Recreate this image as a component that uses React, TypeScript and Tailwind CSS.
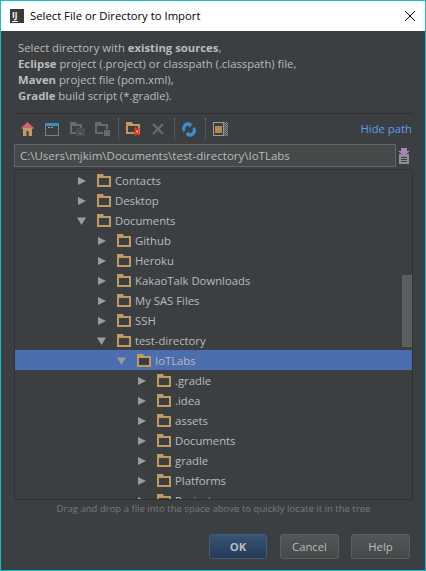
import React from "react";

const Folder = () => (
  <svg width="14" height="13" viewBox="0 0 14 13" className="shrink-0">
    <path d="M0 0H6L7 2H14V13H0Z" fill="#c19a61" />
    <rect x="2" y="4" width="10" height="7" fill="#3c3f41" />
  </svg>
);
const Arrow = ({ open }: { open: boolean }) => (
  <svg width="10" height="10" viewBox="0 0 10 10" className="mt-[1px] shrink-0">
    {open ? <path d="M0 1.5H9L4.5 9Z" fill="#9a9c9e" /> : <path d="M1 1L9 5L1 9Z" fill="#9a9c9e" />}
  </svg>
);

const rows: { t: string; l: number; open?: boolean; sel?: boolean }[] = [
  { t: "Contacts", l: 0 },
  { t: "Desktop", l: 0 },
  { t: "Documents", l: 0, open: true },
  { t: "Github", l: 1 },
  { t: "Heroku", l: 1 },
  { t: "KakaoTalk Downloads", l: 1 },
  { t: "My SAS Files", l: 1 },
  { t: "SSH", l: 1 },
  { t: "test-directory", l: 1, open: true },
  { t: "IoTLabs", l: 2, open: true, sel: true },
  { t: ".gradle", l: 3 },
  { t: ".idea", l: 3 },
  { t: "assets", l: 3 },
  { t: "Documents", l: 3 },
  { t: "gradle", l: 3 },
  { t: "Platforms", l: 3 },
  { t: "Projects", l: 3 },
];
const pads = ["pl-[62px]", "pl-[82px]", "pl-[102px]", "pl-[122px]"];

const Sep = () => <div className="h-[22px] w-0 border-l border-dotted border-[#6b6e70]" />;

export default function App() {
  return (
    <div
      className="flex h-[571px] w-[426px] flex-col border border-[#18bcc9] bg-[#3c3f41] text-[11.3px] text-[#bbbbbb]"
      style={{ fontFamily: '"Open Sans","Noto Sans",sans-serif' }}
    >
      <div className="flex h-[30px] shrink-0 items-center bg-white pl-[9px] pr-[10px] text-[#000]">
        <div className="relative h-[14px] w-[14px] shrink-0 bg-[#3a3a3a]">
          <span className="absolute left-[2px] top-[1px] text-[8px] font-bold leading-[9px] text-white">IJ</span>
          <span className="absolute bottom-[1px] left-[2px] h-[1px] w-[6px] bg-white" />
        </div>
        <span className="ml-[6px] flex-1">Select File or Directory to Import</span>
        <svg width="10" height="10" viewBox="0 0 10 10">
          <path d="M0 0L10 10M10 0L0 10" stroke="#000" strokeWidth="1" />
        </svg>
      </div>

      <div className="flex min-h-0 flex-1 flex-col pl-[13px] pr-[12px]">
        <div className="shrink-0 pl-[4px] pt-[9px] leading-[16px]">
          <div>Select directory with <b>existing sources</b>,</div>
          <div><b>Eclipse</b> project (.project) or classpath (.classpath) file,</div>
          <div><b>Maven</b> project file (pom.xml),</div>
          <div><b>Gradle</b> build script (*.gradle).</div>
        </div>

        <div className="mt-[9px] h-[1px] shrink-0 bg-[#2f3133]" />

        <div className="flex h-[30px] shrink-0 items-center justify-between">
          <div className="flex items-center pl-[7px]">
            <svg width="13" height="14" viewBox="0 0 13 14">
              <path d="M6.5 0L13 6L12 7H1L0 6Z" fill="#c8646a" />
              <path d="M2 6H11V14H7.5V9H5.5V14H2Z" fill="#c19a61" />
            </svg>
            <svg width="14" height="13" viewBox="0 0 14 13" className="ml-[11px]">
              <rect width="14" height="13" fill="#7d7f80" />
              <rect width="14" height="3" fill="#3d8fc9" />
              <rect x="1" y="3" width="12" height="9" fill="#3c3f41" />
              <rect x="3" y="4" width="2" height="1" fill="#d9a441" />
              <rect x="6" y="4" width="2" height="1" fill="#6ab0de" />
            </svg>
            <svg width="15" height="14" viewBox="0 0 15 14" className="ml-[11px]">
              <path d="M0 0H6L7 2H12V6H6V12H0Z" fill="#686a6c" />
              <rect x="2" y="4" width="8" height="6" fill="#3c3f41" />
              <rect x="6" y="6" width="9" height="8" fill="#4a4c4e" />
              <rect x="9" y="11" width="3" height="1" fill="#7d7f80" />
            </svg>
            <svg width="15" height="14" viewBox="0 0 15 14" className="ml-[10px]">
              <path d="M0 0H6L7 2H13V7H8V12H0Z" fill="#686a6c" />
              <rect x="2" y="4" width="9" height="6" fill="#3c3f41" />
              <rect x="9" y="8" width="6" height="6" fill="#686a6c" />
            </svg>
            <div className="ml-[8px]"><Sep /></div>
            <svg width="15" height="14" viewBox="0 0 15 14" className="ml-[7px]">
              <path d="M0 0H6L7 2H14V12H0Z" fill="#c19a61" />
              <rect x="2" y="4" width="10" height="6" fill="#3c3f41" />
              <path d="M10 4L11 7L14 6L12.5 9L15 10L12.5 11L13.5 14L11 12.5L9 14L9 11.5L6.5 10L9 9L8 6.5Z" fill="#e8372a" />
              <circle cx="11" cy="9.5" r="1" fill="#f7d046" />
            </svg>
            <svg width="12" height="12" viewBox="0 0 12 12" className="ml-[11px]">
              <path d="M1 1L11 11M11 1L1 11" stroke="#686a6c" strokeWidth="2.4" />
            </svg>
            <div className="ml-[10px]"><Sep /></div>
            <svg width="14" height="15" viewBox="0 0 14 15" className="ml-[7px]">
              <path d="M9 1A6 6 0 0 0 1.5 10L3.5 8.5A3.5 3.5 0 0 1 7 3.5V6L10.5 2.5L7 0Z" fill="#3f8fcf" />
              <path d="M5 14A6 6 0 0 0 12.5 5L10.5 6.5A3.5 3.5 0 0 1 7 11.5V9L3.5 12.5L7 15Z" fill="#3f8fcf" />
            </svg>
            <div className="ml-[9px]"><Sep /></div>
            <div className="relative ml-[7px] h-[14px] w-[15px] bg-[repeating-conic-gradient(#8a8c8e_0_25%,#4a4c4e_0_50%)] bg-[length:2px_2px]">
              <div className="absolute left-0 top-0 flex h-[14px] w-[11px] items-center justify-center border border-[#9a9c9e] bg-[#3c3f41]">
                <div className="h-[7px] w-[7px] bg-[#b98a4e]" />
              </div>
            </div>
          </div>
          <span className="mr-[1px] mt-[1px] text-[#589df6]">Hide path</span>
        </div>

        <div className="flex h-[23px] shrink-0 items-center">
          <div className="flex h-[23px] flex-1 items-center border border-[#646464] bg-[#45494a] pl-[5px] text-[11.5px]">
            C:\Users\mjkim\Documents\test-directory\IoTLabs
          </div>
          <svg width="12" height="16" viewBox="0 0 12 16" className="ml-[2px] mr-[3px] shrink-0">
            <path d="M3 0H9V3H12L6 8L0 3H3Z" fill="#b07fc0" />
            <rect x="1" y="6" width="10" height="10" fill="#8e9092" />
            <rect x="3" y="9" width="6" height="1" fill="#3c3f41" />
            <rect x="3" y="11" width="6" height="1" fill="#3c3f41" />
            <rect x="3" y="13" width="6" height="1" fill="#3c3f41" />
          </svg>
        </div>

        <div className="relative mt-[2px] h-[331px] shrink-0 overflow-hidden border border-[#323232]">
          {rows.map((r, i) => (
            <div
              key={i}
              className={`flex h-[20px] items-center ${pads[r.l]} ${r.sel ? "bg-[#4b6eaf]" : ""}`}
            >
              <Arrow open={!!r.open} />
              <div className="ml-[10px]">
                <Folder />
              </div>
              <span className="ml-[4px] mt-[2px]">{r.t}</span>
            </div>
          ))}
          <div className="absolute right-0 top-[105px] h-[72px] w-[10px] border border-[#5f6163] bg-[#5a5c5e]" />
        </div>

        <div className="mt-[2px] shrink-0 text-center text-[9.55px] leading-[14px] text-[#787878]">
          Drag and drop a file into the space above to quickly locate it in the tree
        </div>

        <div className="mt-[18px] flex shrink-0 justify-end gap-[12px] pr-[3px]">
          <button className="mr-[1px] h-[25px] w-[58px] rounded-[3px] border border-[#4a5a70] bg-gradient-to-b from-[#385478] to-[#233a57] pt-[1px] font-bold">OK</button>
          <button className="h-[25px] w-[59px] rounded-[3px] border border-[#5e6060] bg-gradient-to-b from-[#515658] to-[#44494a] pt-[1px]">Cancel</button>
          <button className="h-[25px] w-[59px] rounded-[3px] border border-[#5e6060] bg-gradient-to-b from-[#515658] to-[#44494a] pt-[1px]">Help</button>
        </div>
      </div>
    </div>
  );
}
